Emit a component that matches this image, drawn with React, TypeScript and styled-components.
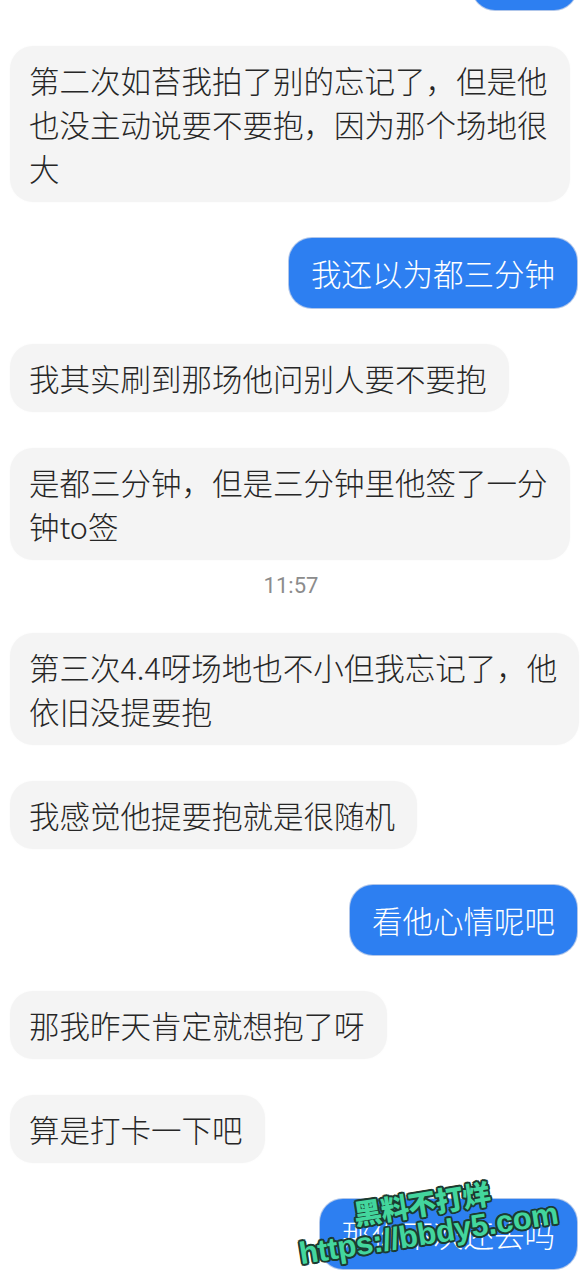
import React from "react";
import styled, { createGlobalStyle, css } from "styled-components";

const GlobalStyle = createGlobalStyle`
  html, body {
    margin: 0;
    padding: 0;
    background: #ffffff;
  }
  body {
    font-family: "Noto Sans CJK SC", "Noto Sans", sans-serif;
    overflow: hidden;
  }
`;

type Side = "in" | "out";

type Item =
  | { kind: "msg"; side: Side; lines: string[] }
  | { kind: "time"; text: string };

const items: Item[] = [
  { kind: "msg", side: "out", lines: ["嗯嗯"] },
  {
    kind: "msg",
    side: "in",
    lines: ["第二次如苔我拍了别的忘记了，但是他", "也没主动说要不要抱，因为那个场地很", "大"],
  },
  { kind: "msg", side: "out", lines: ["我还以为都三分钟"] },
  { kind: "msg", side: "in", lines: ["我其实刷到那场他问别人要不要抱"] },
  { kind: "msg", side: "in", lines: ["是都三分钟，但是三分钟里他签了一分", "钟to签"] },
  { kind: "time", text: "11:57" },
  { kind: "msg", side: "in", lines: ["第三次4.4呀场地也不小但我忘记了，他", "依旧没提要抱"] },
  { kind: "msg", side: "in", lines: ["我感觉他提要抱就是很随机"] },
  { kind: "msg", side: "out", lines: ["看他心情呢吧"] },
  { kind: "msg", side: "in", lines: ["那我昨天肯定就想抱了呀"] },
  { kind: "msg", side: "in", lines: ["算是打卡一下吧"] },
  { kind: "msg", side: "out", lines: ["那你下次还去吗"] },
];

const Page = styled.div`
  position: relative;
  width: 580px;
  height: 1280px;
  overflow: hidden;
  background: #ffffff;
`;

const Thread = styled.div`
  display: flex;
  flex-direction: column;
  gap: 36px;
  margin-top: -60px;
`;

const Row = styled.div<{ $side: Side }>`
  display: flex;
  justify-content: ${(p) => (p.$side === "out" ? "flex-end" : "flex-start")};
  padding: ${(p) => (p.$side === "out" ? "0 3px 0 0" : "0 0 0 10px")};
`;

const Bubble = styled.div<{ $side: Side }>`
  box-sizing: border-box;
  white-space: nowrap;
  font-size: 30.5px;
  font-weight: 300;
  line-height: 44px;
  border-radius: 23px;
  ${(p) =>
    p.$side === "out"
      ? css`
          background: #2d7ff1;
          color: #ffffff;
          padding: 13px 22px 13px 22px;
          box-shadow: 0 0 0 1px rgba(28, 92, 196, 0.35);
        `
      : css`
          background: #f4f4f4;
          color: #262626;
          padding: 12px 22px 12px 19px;
          box-shadow: 0 0 3px rgba(0, 0, 0, 0.025);
        `}
`;

const Line = styled.span`
  display: block;
`;

const TimeStamp = styled.div`
  text-align: center;
  font-family: "Roboto", "Noto Sans", sans-serif;
  font-size: 22px;
  line-height: 32px;
  color: #8c8c8c;
  margin: -26px 0 -5px 2px;
`;

const Watermark = styled.div`
  position: absolute;
  left: 292px;
  top: 1208px;
  transform: rotate(-9deg);
  transform-origin: left top;
  display: flex;
  flex-direction: column;
  pointer-events: none;
  color: #43d69d;
  text-shadow:
    -1.5px -1.5px 0 #1b3b31, 1.5px -1.5px 0 #1b3b31, -1.5px 1.5px 0 #1b3b31,
    1.5px 1.5px 0 #1b3b31, 0 -2px 0 #1b3b31, 0 2px 0 #1b3b31, -2px 0 0 #1b3b31,
    2px 0 0 #1b3b31;
`;

const WatermarkTitle = styled.span`
  font-family: "Noto Sans CJK SC", sans-serif;
  font-weight: 900;
  font-size: 28px;
  line-height: 30px;
  margin-left: 60px;
  letter-spacing: -0.5px;
`;

const WatermarkUrl = styled.span`
  font-family: "Liberation Sans", "Arial", sans-serif;
  font-weight: 700;
  font-size: 31px;
  line-height: 34px;
  letter-spacing: -0.3px;
`;

export default function App() {
  return (
    <Page>
      <GlobalStyle />
      <Thread>
        {items.map((item, i) =>
          item.kind === "time" ? (
            <TimeStamp key={i}>{item.text}</TimeStamp>
          ) : (
            <Row key={i} $side={item.side}>
              <Bubble $side={item.side}>
                {item.lines.map((l, j) => (
                  <Line key={j}>{l}</Line>
                ))}
              </Bubble>
            </Row>
          )
        )}
      </Thread>
      <Watermark>
        <WatermarkTitle>黑料不打烊</WatermarkTitle>
        <WatermarkUrl>https://bbdy5.com</WatermarkUrl>
      </Watermark>
    </Page>
  );
}
